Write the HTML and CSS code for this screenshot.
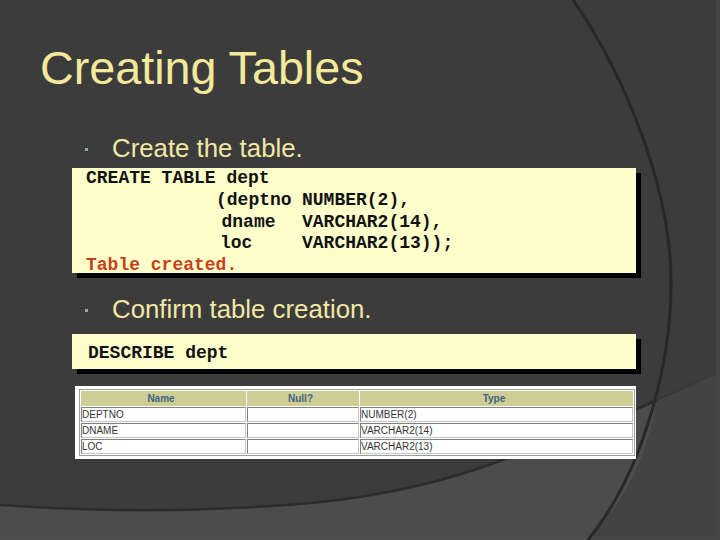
FILE: index.html
```html
<!DOCTYPE html>
<html lang="en">
<head>
<meta charset="utf-8">
<title>Creating Tables</title>
<link rel="stylesheet" href="styles.css">
</head>
<body>
<main class="slide">
  <svg class="backdrop" width="720" height="540" viewBox="0 0 720 540" aria-hidden="true">
    <path class="lighter" d="M0 505 C100 512 200 512 300 504 C370 498 430 485 480 468 C530 451 590 427 637 409 L657 400 C645 470 620 505 588 540 L0 540 Z"/>
    <path class="lower-right" d="M657 400 L720 372 L720 540 L588 540 C620 505 645 470 657 400 Z"/>
    <rect class="strip-bottom" x="0" y="536" width="720" height="4"/>
    <path class="edge" d="M0 505 C100 512 200 512 300 504 C370 498 430 485 480 468 C530 451 590 427 637 409 L657 400"/>
    <path class="edge-faint" d="M657 400 L720 372"/>
    <path class="arc" d="M573 0 C625 75 672 190 671 285 C671 360 645 470 588 540"/>
    <rect class="strip" x="716" y="0" width="4" height="540"/>
  </svg>
  <h1 class="title">Creating Tables</h1>
  <p class="bullet first"><span class="dot"></span>Create the table.</p>
  <div class="code code-one">
    <div class="sql">
      <div class="line">CREATE TABLE dept</div>
      <div class="line"><span class="name deptno">(deptno</span><span>NUMBER(2),</span></div>
      <div class="line"><span class="name dname">dname</span><span>VARCHAR2(14),</span></div>
      <div class="line"><span class="name loc">loc</span><span>VARCHAR2(13));</span></div>
      <div class="line result">Table created.</div>
    </div>
  </div>
  <p class="bullet second"><span class="dot"></span>Confirm table creation.</p>
  <div class="code code-two"><div class="sql"><div class="line">DESCRIBE dept</div></div></div>
  <div class="table-wrap">
    <table class="desc">
      <thead><tr><th class="c1">Name</th><th class="c2">Null?</th><th>Type</th></tr></thead>
      <tbody>
        <tr><td>DEPTNO</td><td></td><td>NUMBER(2)</td></tr>
        <tr><td>DNAME</td><td></td><td>VARCHAR2(14)</td></tr>
        <tr><td>LOC</td><td></td><td>VARCHAR2(13)</td></tr>
      </tbody>
    </table>
  </div>
</main>
</body>
</html>
```
FILE: styles.css
```css
html, body { margin: 0; padding: 0; }
body { background: #3c3c3c; }
.slide {
  position: relative;
  width: 720px;
  height: 540px;
  overflow: hidden;
  background: #3c3c3c;
  font-family: "Liberation Sans", Arial, sans-serif;
  display: flow-root;
}
.backdrop { position: absolute; left: 0; top: 0; }
.lighter { fill: #4c4c4c; }
.lower-right { fill: #434343; }
.strip-bottom { fill: #ffffff; opacity: 0.02; }
.edge { fill: none; stroke: #2c2c2c; stroke-width: 2.5; }
.edge-faint { fill: none; stroke: #373737; stroke-width: 1.5; }
.arc { fill: none; stroke: #282828; stroke-width: 3; }
.strip { fill: #454545; }
.title {
  position: relative;
  margin: 42px 0 0 40px;
  font-size: 46.7px;
  line-height: 52px;
  font-weight: 400;
  color: #f4e99b;
}
.bullet {
  position: relative;
  display: flex;
  align-items: center;
  margin: 0 0 0 85px;
  font-size: 25.8px;
  line-height: 30px;
  color: #f2e8a4;
}
.bullet.first { margin-top: 39px; }
.bullet.second { margin-top: 21px; }
.dot {
  width: 3px;
  height: 3px;
  margin-right: 24px;
  margin-top: 3px;
  background: #98a6ad;
}
.code {
  position: relative;
  margin-left: 72px;
  width: 564px;
  background: #ffffcc;
  box-shadow: 5px 5px 0 #000;
}
.code-one { margin-top: 5px; height: 105px; }
.code-two { margin-top: 10px; height: 35px; }
.sql {
  font-family: "Liberation Mono", "Courier New", monospace;
  font-weight: 700;
  font-size: 18px;
  line-height: 21.75px;
  color: #111;
}
.line { display: flex; white-space: pre; }
.code-one .sql { padding-left: 14px; }
.code-two .sql { padding: 9px 0 0 16px; }
.name { box-sizing: border-box; width: 216px; }
.deptno { padding-left: 130px; }
.dname { padding-left: 135.5px; }
.loc { padding-left: 134px; }
.result { color: #c8401a; }
.table-wrap {
  position: relative;
  margin: 17px 0 0 75px;
  width: 561px;
  box-sizing: border-box;
  padding: 3px 1px 3px 4px;
  background: #fff;
}
.desc {
  width: 100%;
  table-layout: fixed;
  border-collapse: separate;
  border-spacing: 1px;
  border: 1px solid #9c9c9c;
  background: #fff;
}
.desc th {
  height: 15px;
  padding: 0 5px 0 0;
  background: #cfcd96;
  color: #3e6484;
  font-weight: 700;
  font-size: 10px;
}
.desc td {
  height: 13px;
  padding: 0;
  border: 1px solid;
  border-color: #808080 #c4c4c4 #c4c4c4 #808080;
  color: #333;
  font-size: 10px;
  line-height: 13px;
}
.c1 { width: 160px; }
.c2 { width: 107px; }
```
